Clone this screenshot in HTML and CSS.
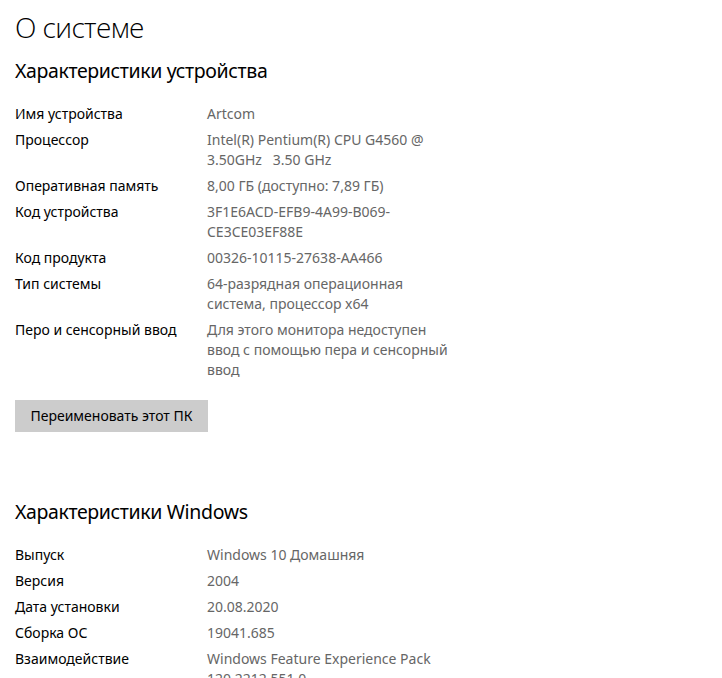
FILE: index.html
```html
<!DOCTYPE html>
<html lang="ru">
<head>
<meta charset="utf-8">
<title>О системе</title>
<link rel="stylesheet" href="styles.css">
</head>
<body>
<main class="page">
  <h1 class="title">О системе</h1>

  <section class="section">
    <h2 class="section-title">Характеристики устройства</h2>
    <dl class="specs">
      <div class="row"><dt>Имя устройства</dt><dd>Artcom</dd></div>
      <div class="row"><dt>Процессор</dt><dd>Intel(R) Pentium(R) CPU G4560 @<br>3.50GHz&nbsp;&nbsp; 3.50 GHz</dd></div>
      <div class="row"><dt>Оперативная память</dt><dd>8,00 ГБ (доступно: 7,89 ГБ)</dd></div>
      <div class="row"><dt>Код устройства</dt><dd>3F1E6ACD-EFB9-4A99-B069-<br>CE3CE03EF88E</dd></div>
      <div class="row"><dt>Код продукта</dt><dd>00326-10115-27638-AA466</dd></div>
      <div class="row"><dt>Тип системы</dt><dd>64-разрядная операционная<br>система, процессор x64</dd></div>
      <div class="row"><dt>Перо и сенсорный ввод</dt><dd>Для этого монитора недоступен<br>ввод с помощью пера и сенсорный<br>ввод</dd></div>
    </dl>
    <button class="btn" type="button">Переименовать этот ПК</button>
  </section>

  <section class="section section-windows">
    <h2 class="section-title">Характеристики Windows</h2>
    <dl class="specs">
      <div class="row"><dt>Выпуск</dt><dd>Windows 10 Домашняя</dd></div>
      <div class="row"><dt>Версия</dt><dd>2004</dd></div>
      <div class="row"><dt>Дата установки</dt><dd>20.08.2020</dd></div>
      <div class="row"><dt>Сборка ОС</dt><dd>19041.685</dd></div>
      <div class="row"><dt>Взаимодействие</dt><dd>Windows Feature Experience Pack<br>120.2212.551.0</dd></div>
    </dl>
  </section>
</main>
</body>
</html>
```

FILE: styles.css
```css
html, body {
  margin: 0;
  padding: 0;
  background: #ffffff;
}

body {
  font-family: "Noto Sans", "Open Sans", "DejaVu Sans", sans-serif;
  color: #000000;
  overflow: hidden;
  height: 678px;
}

.page {
  padding: 9px 0 0 15px;
}

.title {
  margin: 0;
  font-family: "Open Sans", "Noto Sans", sans-serif;
  font-size: 28px;
  line-height: 36px;
  font-weight: 300;
  letter-spacing: -0.6px;
}

.section {
  margin-top: 12px;
}

.section-windows {
  margin-top: 66px;
}

.section-title {
  margin: 0 0 19px 0;
  font-size: 19.5px;
  line-height: 28px;
  font-weight: 400;
  letter-spacing: -0.35px;
}

.specs {
  margin: 0;
  display: flex;
  flex-direction: column;
  gap: 6px;
  font-size: 14px;
  line-height: 20px;
}

.row {
  display: grid;
  grid-template-columns: 192px 260px;
}

.row dt {
  color: #000000;
}

.row dd {
  margin: 0;
  color: #666666;
  white-space: nowrap;
}

.btn {
  margin-top: 20px;
  display: block;
  height: 32px;
  padding: 0 15px;
  border: none;
  background: #cccccc;
  color: #000000;
  font-family: inherit;
  font-size: 14px;
  line-height: 20px;
  width: 193px;
}
```
